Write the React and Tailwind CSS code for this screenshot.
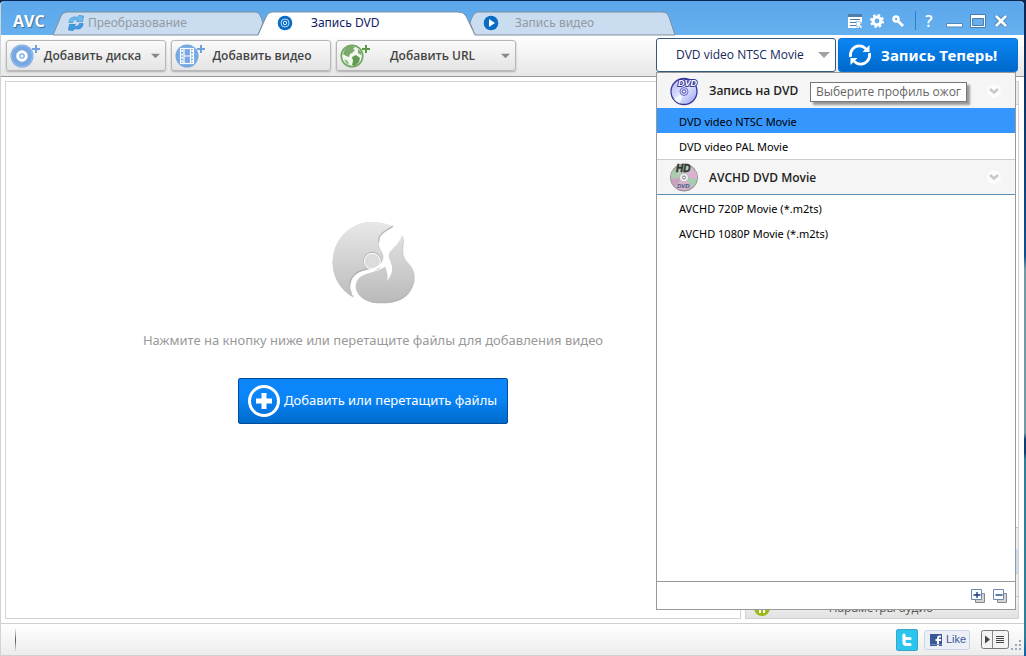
import { useState } from 'react';

const profiles = [
  { title: 'Запись на DVD', Icon: DvdIcon, items: ['DVD video NTSC Movie', 'DVD video PAL Movie'] },
  { title: 'AVCHD DVD Movie', Icon: HdDvdIcon, items: ['AVCHD 720P Movie (*.m2ts)', 'AVCHD 1080P Movie (*.m2ts)'] },
];

/* ---------- Icons ---------- */

function ConvertIcon() {
  return (
    <svg width="16" height="16" viewBox="0 0 16 16">
      <path d="M1 7.5C1 3 5 1 9 2.5L11 0.5L15.5 1L14.5 6.5L8.5 6.5L10 4.8C7 4 5 5 4.5 7.5Z" fill="#6dbcf0" stroke="#3f8fd0" strokeWidth="0.7" />
      <path d="M15 8.5C15 13 11 15 7 13.5L5 15.5L0.5 15L1.5 9.5L7.5 9.5L6 11.2C9 12 11 11 11.5 8.5Z" fill="#3d9be6" stroke="#2f7fc4" strokeWidth="0.7" />
    </svg>
  );
}

function DiscTabIcon() {
  return (
    <svg width="16" height="16" viewBox="0 0 16 16">
      <circle cx="8" cy="8" r="7.3" fill="#0a6cc4" />
      <circle cx="8" cy="8" r="4" fill="none" stroke="#b8dcff" />
      <circle cx="8" cy="8" r="1.7" fill="none" stroke="#e4f2ff" />
    </svg>
  );
}

function PlayTabIcon() {
  return (
    <svg width="16" height="16" viewBox="0 0 16 16">
      <circle cx="8" cy="8" r="7.3" fill="#0a6cc4" />
      <path d="M6 4L12 8L6 12Z" fill="#fff" />
    </svg>
  );
}

function AddDiscIcon() {
  return (
    <svg width="32" height="28" viewBox="0 0 32 28">
      <circle cx="12" cy="14" r="11.5" fill="#78a8e2" />
      <circle cx="12" cy="14" r="10.5" fill="none" stroke="#93bdec" />
      <circle cx="12" cy="14" r="4.3" fill="none" stroke="#fff" strokeWidth="3" />
      <circle cx="12" cy="14" r="1.6" fill="#f2f7fd" />
      <path d="M26 3V11M22 7H30" stroke="#6fa1de" strokeWidth="2" />
    </svg>
  );
}

function AddFilmIcon() {
  return (
    <svg width="32" height="28" viewBox="0 0 32 28">
      <circle cx="12" cy="14" r="11.5" fill="#78a8e2" />
      <rect x="5.5" y="6.5" width="13" height="15" fill="#78a8e2" stroke="#fff" strokeWidth="1.2" />
      <path d="M9 6V22M15.5 6V22M9 14H15.5" stroke="#fff" strokeWidth="1.2" />
      <path d="M7.3 8V21M17.2 8V21" stroke="#fff" strokeWidth="1.6" strokeDasharray="2 1.4" />
      <path d="M26 3V11M22 7H30" stroke="#6fa1de" strokeWidth="2" />
    </svg>
  );
}

function AddUrlIcon() {
  return (
    <svg width="32" height="28" viewBox="0 0 32 28">
      <circle cx="12" cy="14" r="10.7" fill="#f2f7ee" stroke="#71a765" strokeWidth="1.7" />
      <path d="M4 9C6 5 9 4 12 4L15 5L13 7L15 8L12 11L10 12L9 15L6 14L3 12Z" fill="#7bab6b" />
      <path d="M12 15L16 13L20 16L19 20L15 24L12 23L13 19Z" fill="#629a55" />
      <path d="M18 7L21 10L21 13L18 11Z" fill="#7bab6b" />
      <path d="M4 17L8 19L9 23L6 21Z" fill="#8fb982" />
      <path d="M26 3V11M22 7H30" stroke="#5d9a45" strokeWidth="2" />
    </svg>
  );
}

function Arrow({ className }) {
  return (
    <svg className={className} width="12" height="6" viewBox="0 0 12 6">
      <path d="M0 0H12L6 6Z" fill="currentColor" />
    </svg>
  );
}

function RefreshIcon() {
  return (
    <svg width="24" height="24" viewBox="0 0 24 24" fill="none" stroke="#fff" strokeWidth="2.8">
      <path d="M2.5 14C1.5 7.5 6 3 11 2.8C14 2.7 16.5 4 18.5 6.5" />
      <path d="M21.5 10C22.5 16.5 18 21 13 21.2C10 21.3 7.5 20 5.5 17.5" />
      <path d="M21.5 2V9H14.5Z" fill="#fff" stroke="none" />
      <path d="M2.5 22V15H9.5Z" fill="#fff" stroke="none" />
    </svg>
  );
}

function DvdIcon() {
  return (
    <svg width="30" height="30" viewBox="0 0 30 30">
      <defs>
        <linearGradient id="dvd" x1="0" y1="0" x2="1" y2="1">
          <stop offset="0" stopColor="#a9b0f2" />
          <stop offset="0.5" stopColor="#dfe5ff" />
          <stop offset="1" stopColor="#949df0" />
        </linearGradient>
      </defs>
      <circle cx="15" cy="15.5" r="13" fill="url(#dvd)" stroke="#39399b" strokeWidth="1.3" />
      <path d="M15 15L5 23.5A13 13 0 0 0 11 27.5Z" fill="#fff" opacity="0.7" />
      <circle cx="15" cy="15.5" r="4" fill="#c6c8f6" stroke="#7272c8" />
      <circle cx="15" cy="15.5" r="1.7" fill="#fff" stroke="#4b4ba6" />
      <text x="9" y="9.5" fontSize="9" fontWeight="bold" fontStyle="italic" fontFamily="Liberation Sans, sans-serif" fill="#fff" stroke="#33339b" strokeWidth="1.8" paintOrder="stroke">DVD</text>
    </svg>
  );
}

function HdDvdIcon() {
  return (
    <svg width="30" height="30" viewBox="0 0 30 30">
      <defs>
        <linearGradient id="hd" x1="0" y1="0" x2="1" y2="1">
          <stop offset="0" stopColor="#a8a8a8" />
          <stop offset="0.35" stopColor="#b2d4b6" />
          <stop offset="0.6" stopColor="#dfaed0" />
          <stop offset="1" stopColor="#b9b9b9" />
        </linearGradient>
      </defs>
      <circle cx="15" cy="15.5" r="13.5" fill="url(#hd)" stroke="#858585" />
      <path d="M15 15L4 8A13 13 0 0 0 2 17Z" fill="#a9cdb0" />
      <path d="M15 15L2 17A13 13 0 0 0 6 25Z" fill="#c9a0c0" />
      <path d="M15 15L26 8A13 13 0 0 1 28 17Z" fill="#dcb0d0" />
      <path d="M15 15L28 17A13 13 0 0 1 24 25Z" fill="#a5cfae" />
      <circle cx="15" cy="15.5" r="4.5" fill="#ededed" stroke="#b5b5b5" />
      <circle cx="15" cy="15.5" r="1.5" fill="#fff" stroke="#777" />
      <text x="7" y="10" fontSize="10" fontWeight="bold" fontStyle="italic" fontFamily="Liberation Sans, sans-serif" fill="#333" stroke="#333" strokeWidth="0.4">HD</text>
      <text x="8" y="25.5" fontSize="6" fontWeight="bold" fontStyle="italic" fontFamily="Liberation Sans, sans-serif" fill="#3d5a86">DVD</text>
    </svg>
  );
}

function CollapseIcon() {
  return (
    <svg width="14" height="14" viewBox="0 0 14 14">
      <circle cx="7" cy="7" r="7" fill="#fcfcfc" />
      <path d="M3 5L7 8.5L11 5" fill="none" stroke="#c8c8c8" strokeWidth="2.5" />
    </svg>
  );
}

function FlameDisc() {
  return (
    <svg width="90" height="90" viewBox="54 45 270 270">
      <defs>
        <linearGradient id="disc" gradientUnits="userSpaceOnUse" x1="0" y1="68" x2="0" y2="310">
          <stop offset="0" stopColor="#e8e8e8" />
          <stop offset="1" stopColor="#bababa" />
        </linearGradient>
        <filter id="soft" x="-10%" y="-10%" width="120%" height="120%">
          <feDropShadow dx="1" dy="2" stdDeviation="2" floodColor="#888" floodOpacity="0.9" />
        </filter>
      </defs>
      <g filter="url(#soft)" fill="url(#disc)">
        <path d="M130 293C92 272 66 232 68 185C72 115 125 70 182 69C207 69 230 74 248 82C225 95 203 105 204 130C204 142 208 150 214 158C222 172 216 196 206 206C196 213 182 212 168 211C140 214 119 234 119 260C119 274 127 282 130 293Z" />
        <path d="M280 125C273 160 278 178 296 194C320 220 316 256 292 284C264 312 222 312 185 308C148 298 130 272 140 248C152 222 186 224 212 211C220 207 227 202 230 197C239 214 235 230 230 244C256 218 247 192 236 174C234 152 266 144 276 108Z" />
      </g>
      <circle cx="187" cy="186" r="26" fill="#dcdcdc" stroke="#b0b0b0" strokeWidth="3" />
      <circle cx="187" cy="187" r="24" fill="none" stroke="#fff" strokeWidth="3" />
      <path d="M272 64C264 96 208 96 209 128C209 150 230 162 224 184C219 204 238 214 231 246C256 216 242 192 235 170C236 142 286 128 272 64Z" fill="#fff" />
      <path d="M250 80C228 96 205 102 206 130" fill="none" stroke="#b5b5b5" strokeWidth="3" />
      <path d="M130 288C122 228 156 222 178 215C206 208 219 198 225 178" fill="none" stroke="#fff" strokeWidth="8" />
      <path d="M119 256C121 232 142 214 170 210" fill="none" stroke="#b0b0b0" strokeWidth="3" />
    </svg>
  );
}

function PlusCircle() {
  return (
    <svg width="32" height="32" viewBox="0 0 32 32" fill="none" stroke="#fff">
      <circle cx="16" cy="16" r="14.5" strokeWidth="3" />
      <path d="M16 8V24M8 16H24" strokeWidth="5" />
    </svg>
  );
}

function StackIcon({ plus }) {
  return (
    <svg width="14" height="14" viewBox="0 0 14 14">
      <path d="M4.5 4.5H13.5V13.5H4.5Z" fill="#d3d3d3" stroke="#858b92" />
      <path d="M0.5 0.5H10.5V10.5H0.5Z" fill="#fbfcff" stroke="#6d88a8" />
      <path d={plus ? 'M2.5 6H9.5M6 3V9' : 'M2.5 6H9.5'} stroke="#123a7c" strokeWidth="1.3" />
    </svg>
  );
}

/* ---------- Window parts ---------- */

const tabs = [
  { label: 'Преобразование', Icon: ConvertIcon },
  { label: 'Запись DVD', Icon: DiscTabIcon },
  { label: 'Запись видео', Icon: PlayTabIcon },
];

const tabShape = {
  active: 'M0 24L8 6Q10 1 14 1H200Q206 1 208 5L217 24',
  first: 'M0 24L8 5Q10 1 14 1H203Q207 1 210 12L205 24Z',
  last: 'M5 24L0 12Q3 1 8 1H192Q197 1 199 6L205 24Z',
};

const TitleBar = ({ tab, setTab }) => (
  <header className="flex h-[33px] items-end justify-between rounded-tr bg-gradient-to-b from-[#5ba7eb] to-[#66b0ef]">
    <div className="flex items-end">
      <span className="w-[52px] self-center pb-1 pl-3 font-['Open_Sans',sans-serif] text-base leading-5 font-bold text-white [text-shadow:1px_1px_1px_#3b6f9f]">AVC</span>
      <nav className="flex items-end">
        {tabs.map(({ label, Icon }, i) => {
          const active = tab === i;
          const d = active ? tabShape.active : i === 0 ? tabShape.first : tabShape.last;
          return (
            <button
              key={label}
              type="button"
              onClick={() => setTab(i)}
              className={`relative flex h-6 items-center ${active ? 'z-10 w-[217px] gap-[18px] pl-[19px] text-[#101c66]' : 'w-[205px] gap-1 text-[#929aa2]'} ${i === 0 ? 'pl-[15px]' : ''} ${i === 2 ? '-ml-[5px] gap-4 pl-[13px]' : ''}`}
            >
              <svg className="absolute inset-0 h-full w-full overflow-visible" viewBox={active ? '0 0 217 24' : '0 0 205 24'} preserveAspectRatio="none">
                <path d={d} fill={active ? '#fff' : '#c9dcf0'} stroke="#7d8f9f" />
              </svg>
              <span className="relative"><Icon /></span>
              <span className="relative text-xs">{label}</span>
            </button>
          );
        })}
      </nav>
    </div>

    <div className="flex items-center gap-[7px] self-center pt-1 pr-[15px] text-white">
      <button type="button" aria-label="Список">
        <svg width="16" height="16" viewBox="0 0 16 16">
          <path d="M1 1H15V4H1Z" fill="#517ea7" />
          <path d="M1 4H15V10H12V15H1Z" fill="#fff" />
          <path d="M3 6.5H13M3 9.5H9M3 12.5H9" stroke="#517ea7" />
          <path d="M9 8L15 10L13 11.5L15.5 14L14 15.5L11.5 13L10 14.5Z" fill="#fff" stroke="#5b9cd8" strokeWidth="0.6" />
        </svg>
      </button>
      <button type="button" aria-label="Настройки">
        <svg width="14" height="14" viewBox="0 0 16 16">
          <circle cx="8" cy="8" r="4.5" fill="none" stroke="#fff" strokeWidth="3.5" />
          <circle cx="8" cy="8" r="6.8" fill="none" stroke="#fff" strokeWidth="2.4" strokeDasharray="2.8 2.54" />
        </svg>
      </button>
      <button type="button" aria-label="Ключ">
        <svg width="14" height="14" viewBox="0 0 14 14" fill="none" stroke="#fff">
          <circle cx="5" cy="5" r="2.5" strokeWidth="2.6" />
          <path d="M7 7L12 12" strokeWidth="2.8" />
          <path d="M9 11L11 9" />
        </svg>
      </button>
      <span className="ml-[3px] h-[19px] w-px bg-[#2f7fc6]" />
      <button type="button" className="w-3 font-['Open_Sans',sans-serif] text-base leading-4 font-semibold">?</button>
      <button type="button" aria-label="Свернуть" className="pl-1">
        <svg width="17" height="16" viewBox="0 0 17 16"><path d="M0.5 10.5H16.5V14H0.5Z" fill="#fff" stroke="#5487b5" /></svg>
      </button>
      <button type="button" aria-label="Развернуть">
        <svg width="16" height="16" viewBox="0 0 16 16">
          <path d="M0.5 1.5H15.5V14.5H0.5Z" fill="#fff" stroke="#457dae" />
          <path d="M2.5 5.5H13.5V12.5H2.5Z" fill="#68aeec" stroke="#457dae" />
        </svg>
      </button>
      <button type="button" aria-label="Закрыть">
        <svg width="16" height="16" viewBox="0 0 16 16">
          <path d="M3 3L13 13M13 3L3 13" stroke="#457dae" strokeWidth="4.5" />
          <path d="M3 3L13 13M13 3L3 13" stroke="#fff" strokeWidth="2.8" />
        </svg>
      </button>
    </div>
  </header>
);

const ToolButton = ({ Icon, label, arrow, className }) => (
  <button
    type="button"
    className={`flex h-[31px] items-center rounded-[3px] border border-[#b7b7b7] bg-gradient-to-b from-[#fafafa] to-[#e4e4e4] pr-[5px] pl-[3px] font-['Open_Sans',sans-serif] text-xs font-semibold text-[#444] shadow-[0_1px_2px_#aaa] ${className}`}
  >
    <Icon />
    <span className="flex-1 pt-px pr-2 text-center whitespace-nowrap">{label}</span>
    {arrow && <Arrow className="w-[9px] text-[#888]" />}
  </button>
);

const ProfileMenu = ({ selected, onSelect }) => (
  <div className="absolute top-full right-[2px] left-0 z-20 flex h-[calc(100vh-118px)] flex-col border border-[#999] bg-white">
    <div className="flex-1 overflow-hidden">
      {profiles.map(({ title, Icon, items }, i) => (
        <section key={title}>
          <div className={`relative flex items-center border-[#ccc] bg-[#f5f5f5] pr-[14px] pl-3 ${i > 0 ? 'h-[36px] border-t border-b border-b-[#5c91b5]' : 'h-[35px]'}`}>
            <Icon />
            <h2 className="flex-1 pt-px pl-[10px] font-['Open_Sans',sans-serif] text-xs font-semibold text-[#222]">{title}</h2>
            <CollapseIcon />
            {i === 0 && (
              <div role="tooltip" className="absolute top-[9px] left-[153px] border border-[#777] bg-white px-[5px] font-['Open_Sans',sans-serif] text-xs leading-[18px] whitespace-nowrap text-[#666] shadow-[3px_3px_2px_#999]">
                Выберите профиль ожог
              </div>
            )}
          </div>
          <ul className="pb-px">
            {items.map(item => (
              <li key={item}>
                <button
                  type="button"
                  onClick={() => onSelect(item)}
                  className={`block h-[25px] w-full pt-[3px] pl-[22px] text-left text-[11px] text-black ${item === selected ? 'bg-[#3597fd]' : ''}`}
                >
                  {item}
                </button>
              </li>
            ))}
          </ul>
        </section>
      ))}
    </div>
    <div className="flex h-7 items-center justify-end gap-2 border-t border-[#999] pr-2">
      <button type="button" aria-label="Развернуть все"><StackIcon plus /></button>
      <button type="button" aria-label="Свернуть все"><StackIcon /></button>
    </div>
  </div>
);

const StatusBar = () => (
  <footer className="flex h-[33px] items-center justify-between border-t border-b border-[#cfcfcf] bg-gradient-to-b from-white to-[#ececec]">
    <span className="ml-[14px] h-6 w-px bg-gradient-to-b from-transparent via-[#555] to-transparent" />
    <div className="flex items-center">
      <a href="#" aria-label="Twitter" className="mr-[6px] flex h-[22px] w-[22px] items-center justify-center rounded-[2px] border border-[#36a9c9] bg-[#2bc4ee]">
        <svg width="14" height="16" viewBox="0 0 14 16">
          <path d="M4 3V10Q4 12.5 6.5 12.5H10M4 6.5H10" fill="none" stroke="#fff" strokeWidth="3.2" strokeLinecap="round" />
        </svg>
      </a>
      <a href="#" className="mr-[11px] flex h-[20px] w-[46px] items-center gap-1 rounded-[3px] border border-[#cad4e7] bg-[#eceff6] pl-[5px] font-['Liberation_Sans',sans-serif] text-[11px] text-[#3b5998]">
        <svg width="12" height="12" viewBox="0 0 12 12">
          <path d="M0 0H12V12H0Z" fill="#3b5998" />
          <path d="M11 2.5H9.5Q8 2.5 8 4V12M5.5 6H11" fill="none" stroke="#fff" strokeWidth="1.9" />
          <path d="M0 10.5H12" stroke="#7187b5" />
        </svg>
        Like
      </a>
      <button type="button" aria-label="Панель" className="mr-[2px] h-[19px]">
        <svg width="28" height="19" viewBox="0 0 28 19">
          <rect x="0.5" y="0.5" width="27" height="18" rx="2" fill="#f3f3f3" stroke="#777" />
          <path d="M11.5 1V18" stroke="#888" />
          <path d="M4 5.5L9 9.5L4 13.5Z" fill="#444" />
          <path d="M15 6.5H23M15 8.5H23M15 10.5H23M15 12.5H23" stroke="#444" />
        </svg>
      </button>
      <svg className="mr-[2px] self-end" width="11" height="11" viewBox="0 0 11 11" fill="#9baabb">
        <path d="M8 0H10V2H8ZM4 4H6V6H4ZM8 4H10V6H8ZM0 8H2V10H0ZM4 8H6V10H4ZM8 8H10V10H8Z" />
      </svg>
    </div>
  </footer>
);

const App = () => {
  const [tab, setTab] = useState(1);
  const [profile, setProfile] = useState('DVD video NTSC Movie');

  return (
    <div className="h-screen bg-[linear-gradient(#0b2450,#10508f_39%,#6f9aa6_41%,#6f9aa6_66%,#0d3f73_67%,#0d3f73_69%,#2f7f98_70%,#2f7f98_97%,#0d5fa8)] pt-px pr-[2px] font-['Noto_Sans',sans-serif]">
      <div className="flex h-full flex-col overflow-hidden rounded-t border-t border-l border-t-[#5ba7eb] border-l-[#cfd3d6] bg-white">
        <TitleBar tab={tab} setTab={setTab} />

        {/* Toolbar */}
        <div className="flex h-[42px] items-center justify-between border-b border-[#999] bg-gradient-to-b from-white to-[#e7e7e7] pr-[6px] pl-[5px]">
          <div className="flex gap-[5px]">
            <ToolButton Icon={AddDiscIcon} label="Добавить диска" arrow className="w-[160px]" />
            <ToolButton Icon={AddFilmIcon} label="Добавить видео" className="w-[160px]" />
            <ToolButton Icon={AddUrlIcon} label="Добавить URL" arrow className="w-[180px]" />
          </div>

          <div className="relative flex gap-[2px] self-start pt-[3px]">
            <div className="relative">
              <select
                aria-label="Профиль"
                value={profile}
                onChange={e => setProfile(e.target.value)}
                className="block h-[34px] w-[180px] appearance-none rounded-[3px] border border-[#335a7d] bg-white pl-[19px] font-['Open_Sans',sans-serif] text-xs text-[#14285a]"
              >
                {profiles.flatMap(p => p.items).map(item => <option key={item}>{item}</option>)}
              </select>
              <Arrow className="pointer-events-none absolute top-[14px] right-[6px] text-[#a3a3a3]" />
            </div>
            <button type="button" className="flex h-[34px] w-[180px] items-center gap-[9px] rounded-[3px] border border-[#0870d0] bg-gradient-to-b from-[#0c86f4] to-[#0069cb] pl-[9px] text-[15px] font-bold whitespace-nowrap text-white">
              <RefreshIcon />
              Запись Теперь!
            </button>
            <ProfileMenu selected={profile} onSelect={setProfile} />
          </div>
        </div>

        {/* Drop area and the settings column behind the menu */}
        <main className="flex min-h-0 flex-1 gap-1 py-1 pr-[5px] pl-1">
          <section className="flex flex-1 flex-col items-center justify-center border border-[#d3d3d3] pb-[62px]">
            <FlameDisc />
            <p className="mt-6 text-[13px] leading-6 text-[#999]">Нажмите на кнопку ниже или перетащите файлы для добавления видео</p>
            <button type="button" className="mt-[26px] flex h-[46px] w-[270px] items-center gap-1 rounded-[2px] border border-[#034c98] bg-gradient-to-b from-[#0b86fa] from-40% to-[#006bcb] pl-[9px] text-[13px] whitespace-nowrap text-white">
              <PlusCircle />
              Добавить или перетащить файлы
            </button>
          </section>
          <aside className="flex w-[274px] flex-col border border-[#d0d0d0]">
            <div className="h-[23px] border-b border-[#d0d0d0] bg-[#ececec]" />
            <div className="flex-1" />
            <div className="h-[22px] border-t border-[#c5c5c5] bg-[#eee]" />
            <div className="h-6 bg-[#c3def5]" />
            <div className="h-[23px] border-t border-[#c5c5c5] bg-[#eee]" />
            <div className="flex h-[22px] items-center border-t border-[#c5c5c5] bg-gradient-to-b from-[#f4f4f4] to-[#e2e2e2] pr-[26px] pl-2 font-['Open_Sans',sans-serif] text-xs text-[#555]">
              <svg width="16" height="16" viewBox="0 0 16 16">
                <circle cx="8" cy="8" r="8" fill="#9aba18" />
                <path d="M6 4V13M10 4V13" stroke="#fff" strokeWidth="2" />
              </svg>
              <span className="flex-1 text-center">Параметры аудио</span>
            </div>
          </aside>
        </main>

        <StatusBar />
      </div>
    </div>
  );
};

export default App;
